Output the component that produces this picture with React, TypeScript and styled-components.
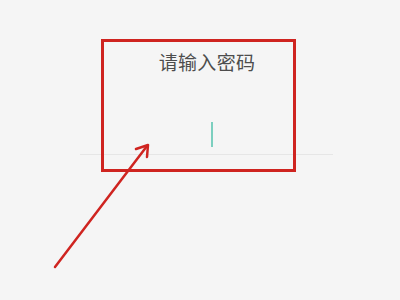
import React from "react";
import styled, { createGlobalStyle } from "styled-components";

const Global = createGlobalStyle`
  html, body { margin: 0; padding: 0; background: #f5f5f5; }
  #root { width: 400px; height: 300px; }
`;

const Page = styled.div`
  position: relative;
  width: 400px;
  height: 300px;
  background: #f5f5f5;
  overflow: hidden;
  font-family: "Noto Sans CJK SC", "Noto Sans", sans-serif;
  display: flex;
  flex-direction: column;
  align-items: center;
  padding-top: 49px;
  box-sizing: border-box;
`;

const Title = styled.div`
  font-size: 19px;
  line-height: 26px;
  color: #4d4d4d;
  margin-left: 14px;
  letter-spacing: 0.3px;
`;

const Field = styled.div`
  margin-top: 40px;
  width: 253px;
  height: 40px;
  border-bottom: 1px solid #e6e6e6;
  display: flex;
  justify-content: center;
  padding-top: 7px;
  box-sizing: border-box;
  margin-left: 13px;
`;

const Caret = styled.div`
  width: 2px;
  height: 25px;
  background: #7ccfbf;
  margin-left: 10px;
`;

const Highlight = styled.div`
  position: absolute;
  left: 101px;
  top: 39px;
  width: 195px;
  height: 133px;
  border: 3px solid #cf2420;
  box-sizing: border-box;
`;

const Arrow = styled.svg`
  position: absolute;
  left: 0;
  top: 0;
  pointer-events: none;
`;

export default function App() {
  return (
    <>
      <Global />
      <Page>
        <Title>请输入密码</Title>
        <Field>
          <Caret />
        </Field>
        <Highlight />
        <Arrow width="400" height="300" viewBox="0 0 400 300">
          <line x1="55" y1="267" x2="147" y2="146" stroke="#cf2420" strokeWidth="2.5" strokeLinecap="round" />
          <polyline points="136,149 148,145 147,157" fill="none" stroke="#cf2420" strokeWidth="2.5" strokeLinecap="round" strokeLinejoin="round" />
        </Arrow>
      </Page>
    </>
  );
}
